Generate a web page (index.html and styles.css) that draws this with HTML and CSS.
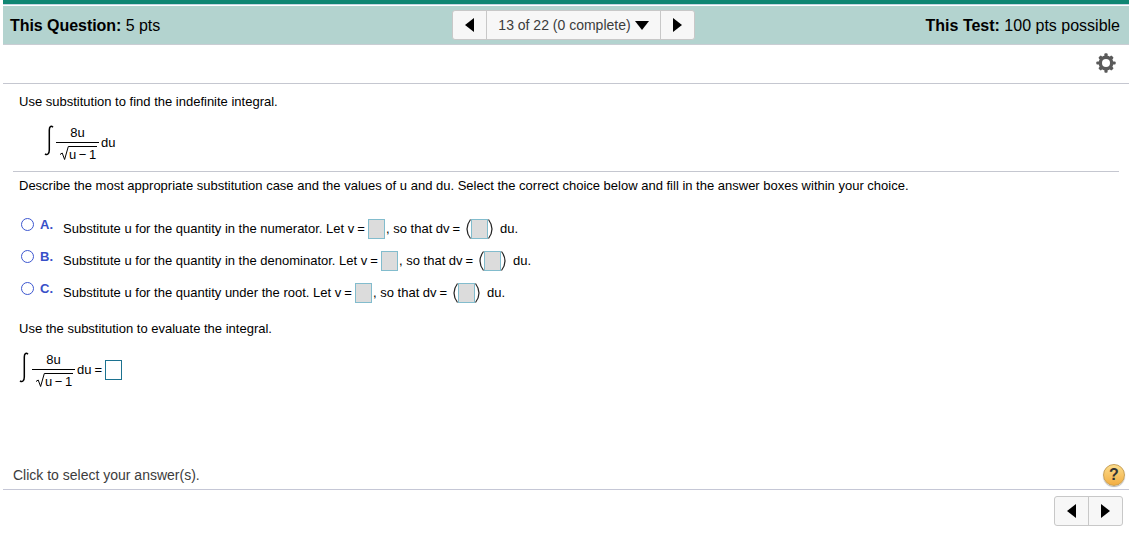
FILE: index.html
```html
<!DOCTYPE html>
<html lang="en">
<head>
    <meta charset="UTF-8">
    <meta name="viewport" content="width=device-width, initial-scale=1.0">
    <title>Test - Question 13</title>
    <link rel="stylesheet" href="styles.css">
</head>
<body>

    <div class="page">
        <div class="top-bar"></div>

        <div class="header">
            <div class="question-points"><b>This Question:</b> 5 pts</div>
            <div class="nav">
                <button class="prev"><svg width="9" height="14"><path d="M9 0V14L0 7Z"/></svg></button>
                <button class="count"><span>13 of 22 (0 complete)</span><svg width="14" height="9"><path d="M0 0H14L7 9Z"/></svg></button>
                <button class="next"><svg width="9" height="14"><path d="M0 0V14L9 7Z"/></svg></button>
            </div>
            <div class="test-points"><b>This Test:</b> 100 pts possible</div>
        </div>

        <div class="toolbar">
            <svg class="gear" width="20" height="20" viewBox="-10 -10 20 20">
                <g fill="#5a5a5a">
                    <rect x="-1.6" y="-9.7" width="3.2" height="19.4" rx="1"/>
                    <rect x="-1.8" y="-9.2" width="3.6" height="18.4" rx="1" transform="rotate(45)"/>
                    <rect x="-1.6" y="-9.7" width="3.2" height="19.4" rx="1" transform="rotate(90)"/>
                    <rect x="-1.8" y="-9.2" width="3.6" height="18.4" rx="1" transform="rotate(135)"/>
                    <circle r="7.4"/>
                </g>
                <circle r="4" fill="#fff"/>
            </svg>
        </div>

        <div class="question">
            <p class="intro">Use substitution to find the indefinite integral.</p>
            <div class="math math-indent">
                <svg class="integral" width="10" height="31" viewBox="0 0 10 31"><path d="M9 2.2C7 .2 5.3 1.6 5.3 5V25C5.3 29 3.2 30.5 1 28.8"/></svg>
                <div class="fraction">
                    <span class="top">8u</span>
                    <span class="bottom"><svg width="9" height="15" viewBox="0 0 9 15"><path d="M0 8.5L2.2 7L4.6 13.5L8.3 .5H9"/></svg><span class="root">u − 1</span></span>
                </div>
                <span class="du">du</span>
            </div>
        </div>

        <div class="answers">
            <p class="describe">Describe the most appropriate substitution case and the values of u and du. Select the correct choice below and fill in the answer boxes within your choice.</p>

            <div class="choice">
                <span class="radio"></span>
                <b class="letter">A.</b>
                <span class="label label-a">Substitute u for the quantity in the numerator. Let v<i class="eq">=</i></span>
                <span class="box"></span>
                <span class="so">, so that dv<i class="eq">=</i></span>
                <span class="paren-box"><svg width="5" height="20"><path d="M4.5 .5Q-2.5 10 4.5 19.5"/></svg><span class="box"></span><svg width="5" height="20"><path d="M.5 .5Q7.5 10 .5 19.5"/></svg></span>
                <span>du.</span>
            </div>
            <div class="choice">
                <span class="radio"></span>
                <b class="letter">B.</b>
                <span class="label label-b">Substitute u for the quantity in the denominator. Let v<i class="eq">=</i></span>
                <span class="box"></span>
                <span class="so">, so that dv<i class="eq">=</i></span>
                <span class="paren-box"><svg width="5" height="20"><path d="M4.5 .5Q-2.5 10 4.5 19.5"/></svg><span class="box"></span><svg width="5" height="20"><path d="M.5 .5Q7.5 10 .5 19.5"/></svg></span>
                <span>du.</span>
            </div>
            <div class="choice">
                <span class="radio"></span>
                <b class="letter">C.</b>
                <span class="label label-c">Substitute u for the quantity under the root. Let v<i class="eq">=</i></span>
                <span class="box"></span>
                <span class="so">, so that dv<i class="eq">=</i></span>
                <span class="paren-box"><svg width="5" height="20"><path d="M4.5 .5Q-2.5 10 4.5 19.5"/></svg><span class="box"></span><svg width="5" height="20"><path d="M.5 .5Q7.5 10 .5 19.5"/></svg></span>
                <span>du.</span>
            </div>

            <p class="evaluate">Use the substitution to evaluate the integral.</p>
            <div class="math math-answer">
                <svg class="integral" width="10" height="31" viewBox="0 0 10 31"><path d="M9 2.2C7 .2 5.3 1.6 5.3 5V25C5.3 29 3.2 30.5 1 28.8"/></svg>
                <div class="fraction">
                    <span class="top">8u</span>
                    <span class="bottom"><svg width="9" height="15" viewBox="0 0 9 15"><path d="M0 8.5L2.2 7L4.6 13.5L8.3 .5H9"/></svg><span class="root">u − 1</span></span>
                </div>
                <span class="du du-equals">du<i class="eq">=</i></span>
                <span class="box box-active"></span>
            </div>
        </div>

        <div class="status">
            <span class="status-text">Click to select your answer(s).</span>
            <button class="help">?</button>
        </div>

        <div class="footer">
            <div class="nav">
                <button class="prev"><svg width="9" height="14"><path d="M9 0V14L0 7Z"/></svg></button>
                <button class="next"><svg width="9" height="14"><path d="M0 0V14L9 7Z"/></svg></button>
            </div>
        </div>
    </div>

</body>
</html>
```
FILE: styles.css
```css
* {
    box-sizing: border-box;
}
body {
    margin: 0;
    background-color: #fff;
    color: #000;
    font-family: "Liberation Sans", Arial, sans-serif;
    font-size: 13px;
    line-height: 16px;
}
p {
    margin: 0;
}
svg {
    display: block;
    flex: none;
}
button {
    font-family: inherit;
    padding: 0;
    cursor: pointer;
}
.page {
    width: 1126px;
    margin-left: 3px;
}
.top-bar {
    height: 6px;
    background-color: #0f8673;
    border-bottom: 1px solid #fff;
    box-shadow: inset 0 -1px 0 #c3d5e3;
}
.header {
    display: grid;
    grid-template-columns: 449px 243px 434px;
    height: 39px;
    background-color: #b3d3cf;
    border-bottom: 1px solid #c9cdd3;
    font-size: 16px;
    line-height: 39px;
    white-space: nowrap;
}
.question-points {
    padding-left: 7px;
    letter-spacing: -0.05px;
}
.test-points {
    padding-right: 9px;
    text-align: right;
}
.nav {
    display: flex;
    height: 30px;
    border: 1px solid #c8c8c8;
    border-radius: 3px;
    background-color: #f7f7f7;
}
.header .nav {
    width: 243px;
    margin-top: 4px;
}
.nav button {
    display: flex;
    align-items: center;
    justify-content: center;
    width: 34px;
    border: none;
    background: none;
}
.nav button + button {
    border-left: 1px solid #c8c8c8;
}
.nav .prev {
    width: 33px;
}
.nav .count {
    flex: 1;
    gap: 4px;
    font-size: 14px;
    color: #3c3c3c;
}
.toolbar {
    display: flex;
    align-items: center;
    justify-content: flex-end;
    height: 39px;
    padding: 0 13px 2px 0;
    border-bottom: 1px solid #c5c7d0;
}
.question {
    height: 88px;
    margin: 0 10px;
    padding: 10px 6px 0;
    border-bottom: 1px solid #c5c7d0;
}
.math {
    display: flex;
    height: 38px;
}
.math-indent {
    margin: 15px 0 0 25px;
}
.integral {
    fill: none;
    stroke: #000;
    stroke-width: 1.5;
}
.fraction {
    width: 43px;
    margin-left: 2px;
}
.math-answer .fraction {
    margin-left: 3px;
}
.top {
    display: block;
    height: 18px;
    border-bottom: 1px solid #000;
    text-align: center;
}
.bottom {
    display: flex;
    padding: 3px 0 0 4px;
}
.bottom svg {
    fill: none;
    stroke: #000;
}
.root {
    width: 28px;
    height: 15px;
    border-top: 1px solid #000;
    line-height: 16px;
    word-spacing: -1px;
    white-space: nowrap;
}
.du {
    margin: 10px 0 0 2px;
}
.answers {
    height: 292px;
    padding: 6px 16px 0;
}
.describe {
    margin-bottom: 24px;
    white-space: nowrap;
}
.choice {
    display: flex;
    height: 32px;
    padding-left: 2px;
    white-space: nowrap;
}
.radio {
    width: 13px;
    height: 13px;
    border: 1px solid #3d57d0;
    border-radius: 50%;
}
.letter {
    width: 23px;
    margin-left: 6px;
    color: #3850c8;
    font-size: 13px;
    line-height: 14px;
}
.label,
.so,
.paren-box + span {
    margin-top: 3px;
}
.eq {
    margin-left: 3px;
    font-style: normal;
}
.box {
    display: block;
    flex: none;
    width: 17px;
    height: 20px;
    border: 1px solid #82bccd;
    background-color: #dcdcdc;
}
.choice > .box {
    margin-top: 1px;
}
.label {
    width: 305px;
}
.label-b {
    width: 318px;
}
.label-c {
    width: 292px;
}
.so {
    width: 81px;
    padding-left: 1px;
}
.paren-box {
    display: flex;
    width: 34px;
    margin-top: 1px;
}
.paren-box svg {
    fill: none;
    stroke: #222;
    stroke-width: 1.2;
}
.evaluate {
    margin: 7px 0 15px;
}
.du-equals {
    width: 28px;
}
.box-active {
    margin-top: 8px;
    border-color: #1c7290;
    background-color: #fff;
}
.status {
    display: flex;
    align-items: center;
    justify-content: space-between;
    height: 26px;
    padding: 0 4px 3px 10px;
    border-bottom: 1px solid #c5c7d6;
    font-size: 14px;
    color: #3c3c3c;
}
.help {
    width: 22px;
    height: 22px;
    border: 1px solid #c9a055;
    border-radius: 50%;
    background: linear-gradient(#fbdc8c, #f3ae42);
    box-shadow: 0 1px 1px rgba(0, 0, 0, 0.3);
    color: #333;
    font-size: 16px;
    font-weight: bold;
    line-height: 20px;
}
.footer {
    display: flex;
    justify-content: flex-end;
    padding: 6px 6px 0 0;
}
.footer .nav {
    width: 69px;
}
```
